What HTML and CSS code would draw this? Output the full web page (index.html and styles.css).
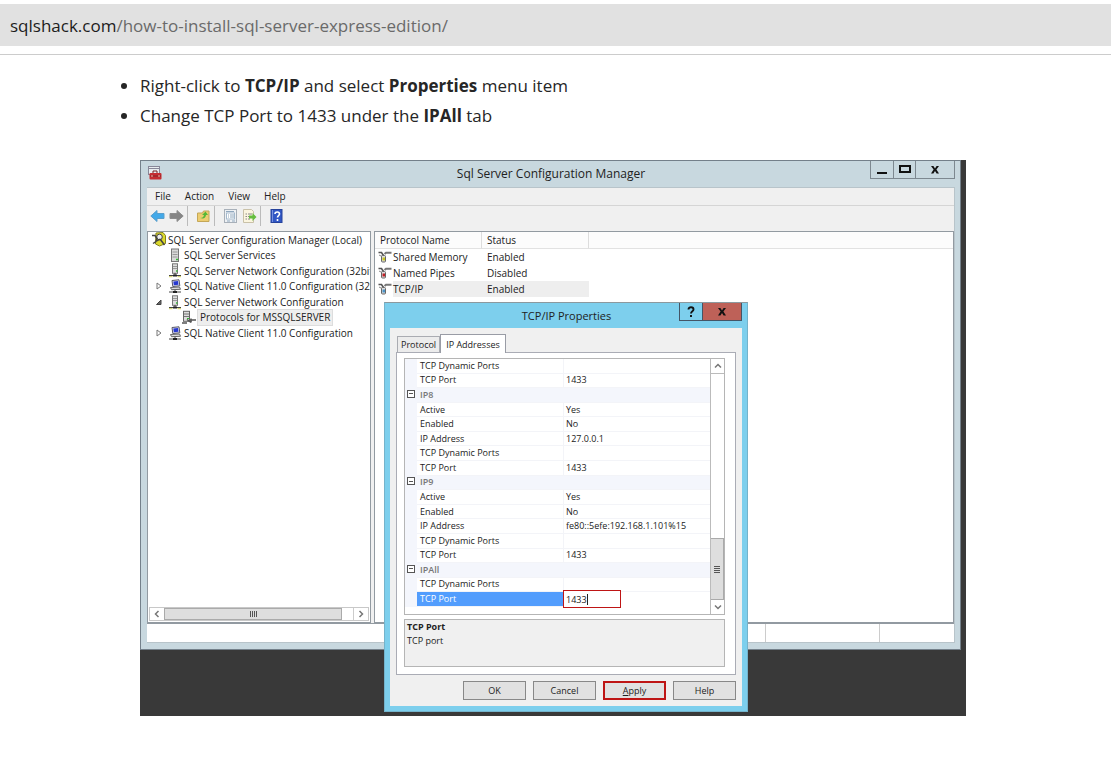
FILE: index.html
```html
<!DOCTYPE html>
<html lang="en">
<head>
<meta charset="utf-8">
<title>How to install SQL Server Express edition</title>
<link rel="stylesheet" href="styles.css">
</head>
<body>
<svg class="defs" width="0" height="0" aria-hidden="true">
  <symbol id="server" viewBox="0 0 14 15"><rect x="3.500" y="1" width="7" height="12.500" fill="#d9d9d9" stroke="#777"/><path d="M4.500 4h5M4.500 6.500h5M4.500 9h5" stroke="#999"/><path d="M8 11.500h2" stroke="#3b3" stroke-width="1.500"/></symbol>
  <symbol id="netserver" viewBox="0 0 14 15"><rect x="4.500" y=".8" width="5" height="9.500" fill="#ddd" stroke="#777"/><path d="M5 3.500h4M5 5.500h4" stroke="#999"/><path d="M8 8h1.500" stroke="#3b3" stroke-width="1.500"/><path d="M7 10v3M1 12.500h12" stroke="#444"/><path d="M5 12.500h4" stroke="#222" stroke-width="2"/><path d="M1 13.700h3.500M9.500 13.700H13" stroke="#cc5"/></symbol>
  <symbol id="client" viewBox="0 0 14 15"><path d="M4 1.500l7-.7.8 6-7 .7z" fill="#e4e4f4" stroke="#556"/><path d="M5.300 2.600l4.700-.5.500 3.700-4.700.5z" fill="#2638d0"/><path d="M2.500 8.500l9-.5 1 2.300-9 .4z" fill="#ddd" stroke="#666"/><path d="M7 11v2M1 13h12" stroke="#444"/><path d="M5 13h4" stroke="#222" stroke-width="2"/></symbol>
  <symbol id="pipe" viewBox="0 0 14 12"><path d="M6.500 3l1.500-1.200h5.500" fill="none" stroke="#777" stroke-width="2"/><path d="M.5 1.500h3l2 3" fill="none" stroke="#555" stroke-width="1.600"/><path d="M1 4l3 1.500" stroke="#888"/><rect x="3.500" y="4.500" width="4" height="6.500" rx="1" fill="#ddd" stroke="#666"/><rect x="4.500" y="6.500" width="2.500" height="3" fill="currentColor"/></symbol>
</svg>

<header class="address">
  <span class="host">sqlshack.com</span><span class="path">/how-to-install-sql-server-express-edition/</span>
</header>

<main class="article">
  <ul class="steps">
    <li>Right-click to <strong>TCP/IP</strong> and select <strong>Properties</strong> menu item</li>
    <li>Change TCP Port to 1433 under the <strong>IPAll</strong> tab</li>
  </ul>

  <section class="desktop">
    <div class="manager">
      <div class="manager-title">
        <svg class="app-icon" viewBox="0 0 14 14"><rect x=".5" y=".5" width="11" height="8" fill="#e8edf0" stroke="#889"/><path d="M1 2.500h10" stroke="#889"/><path d="M5 7V5h4v2" fill="none" stroke="#722"/><rect x="1.500" y="7" width="12" height="6.500" rx="1" fill="#c62c31"/><path d="M2 10h11" stroke="#80262a"/><path d="M4 9v2M11 9v2" stroke="#eba"/></svg>
        <h1>Sql Server Configuration Manager</h1>
        <div class="window-buttons">
          <button aria-label="Minimize"><svg viewBox="0 0 12 10"><path d="M1 8h10" stroke="#111" stroke-width="2"/></svg></button>
          <button aria-label="Maximize"><svg viewBox="0 0 12 10"><rect x="1" y="1" width="10" height="6" fill="none" stroke="#111" stroke-width="2"/></svg></button>
          <button class="wide" aria-label="Close"><svg viewBox="0 0 12 10"><path d="M2 1h2.400L6 3.400 7.600 1H10L7.400 4.500 10 8.500H7.600L6 6 4.400 8.500H2l2.600-4z" fill="#111"/></svg></button>
        </div>
      </div>
      <div class="manager-client">
        <nav class="menu">
          <button>File</button><button>Action</button><button>View</button><button>Help</button>
        </nav>
        <div class="toolbar">
          <button aria-label="Back"><svg viewBox="0 0 15 14"><path d="M.8 7L7 1.500v3h7v5H7v3z" fill="#42a9e9" stroke="#5a9fcc"/></svg></button>
          <button class="forward" aria-label="Forward"><svg viewBox="0 0 15 14"><path d="M14.200 7L8 1.500v3H1v5h7v3z" fill="#858585" stroke="#8d8d8d"/></svg></button>
          <i></i>
          <button aria-label="Up one level"><svg viewBox="0 0 15 14"><path d="M1.500 4h5l1-2h5.500v10.500H1.500z" fill="#edcd71" stroke="#c4a758"/><path d="M4 9c3 0 3.500-1 4-3H6l3.500-3.500L12 6h-2c-.5 3-2 4-6 3z" fill="#55b838"/></svg></button>
          <i></i>
          <button aria-label="Properties"><svg viewBox="0 0 15 14"><rect x="1.500" y=".5" width="12" height="13" fill="#eef1f4" stroke="#a8b0b9"/><rect x="3.500" y="4" width="8" height="6" fill="#fff" stroke="#a5bacd"/><path d="M3 2.500h8M5 6h1M7 6h4M5 8h1M7 8h4M4 12h3M9 12h3" stroke="#8fa7bd"/></svg></button>
          <button class="export" aria-label="Export list"><svg viewBox="0 0 15 14"><path d="M1.500.5h8l2 2v11h-10z" fill="#fbf5df" stroke="#c9c1a8"/><path d="M3.500 5H5M6 5h4M3.500 7.500H5M6 7.500h2M3.500 10H5M6 10h2" stroke="#888"/><path d="M7 6.500h3.500V4l4 4-4 4V9.500H7z" fill="#65bd3e"/></svg></button>
          <i></i>
          <button aria-label="Help"><svg viewBox="0 0 15 14"><rect x="2" y=".5" width="11" height="13" fill="#3157c5" stroke="#26439b"/><path d="M3.500 1v12" stroke="#7892df"/><path d="M6 5c0-3 4.500-2.500 4.500 0 0 1.600-2 1.500-2 3.500M8.500 10v2" fill="none" stroke="#fff" stroke-width="1.600"/></svg></button>
        </div>
        <div class="panes">
          <div class="tree-pane">
            <ul class="tree">
              <li class="root"><svg viewBox="0 0 14 15"><path d="M4 1l7-.5 2.500 3v8l-6 2.500-4-2z" fill="#dcd92b" stroke="#83801c"/><circle cx="7.500" cy="5" r="2.800" fill="#eee" stroke="#444"/><path d="M0 3.500h3l2 3-1 3-3 2M8 7l4.500 6M5 9l3-2" fill="none" stroke="#444" stroke-width="1.500"/></svg><span>SQL Server Configuration Manager (Local)</span></li>
              <li><b></b><svg><use href="#server"/></svg><span>SQL Server Services</span></li>
              <li><b></b><svg><use href="#netserver"/></svg><span>SQL Server Network Configuration (32bit</span></li>
              <li><b><svg viewBox="0 0 6 8"><path d="M1 1v6l4-3z" fill="#fff" stroke="#777"/></svg></b><svg><use href="#client"/></svg><span>SQL Native Client 11.0 Configuration (32l</span></li>
              <li><b><svg viewBox="0 0 6 8"><path d="M5 2v4.500H.5z" fill="#666" stroke="#444"/></svg></b><svg><use href="#netserver"/></svg><span>SQL Server Network Configuration</span></li>
              <li class="leaf"><svg viewBox="0 0 14 14"><rect x="1.500" y=".8" width="6" height="10" fill="#ddd" stroke="#666"/><path d="M2 3.500h5M2 6h5" stroke="#777"/><path d="M0 12.500h5M5 9l4 3M8 9.500h6M9 8v4" stroke="#555" stroke-width="1.500"/><path d="M5 8h2" stroke="#3b3"/></svg><span class="selected">Protocols for MSSQLSERVER</span></li>
              <li><b><svg viewBox="0 0 6 8"><path d="M1 1v6l4-3z" fill="#fff" stroke="#777"/></svg></b><svg><use href="#client"/></svg><span>SQL Native Client 11.0 Configuration</span></li>
            </ul>
            <div class="scroll-x">
              <button aria-label="Scroll left"><svg viewBox="0 0 8 8"><path d="M5.500 1l-3 3 3 3" fill="none" stroke="#777" stroke-width="1.500"/></svg></button>
              <div class="thumb"><svg viewBox="0 0 8 8"><path d="M1.500 1v6M3.500 1v6M5.500 1v6M7.500 1v6" stroke="#555"/></svg></div>
              <div class="track"></div>
              <button aria-label="Scroll right"><svg viewBox="0 0 8 8"><path d="M2.500 1l3 3-3 3" fill="none" stroke="#777" stroke-width="1.500"/></svg></button>
            </div>
          </div>
          <div class="list-pane">
            <table class="protocols">
              <thead><tr><th class="name">Protocol Name</th><th class="status">Status</th><th></th></tr></thead>
              <tbody>
                <tr><td><span class="cell"><svg class="yellow"><use href="#pipe"/></svg>Shared Memory</span></td><td>Enabled</td><td></td></tr>
                <tr><td><span class="cell"><svg class="red"><use href="#pipe"/></svg>Named Pipes</span></td><td>Disabled</td><td></td></tr>
                <tr class="current"><td><span class="cell"><svg class="blue"><use href="#pipe"/></svg><em>TCP/IP</em></span></td><td>Enabled</td><td></td></tr>
              </tbody>
            </table>
          </div>
        </div>
        <div class="statusbar"><span></span><span class="s1"></span><span class="s2"></span></div>
      </div>
    </div>

    <div class="dialog" role="dialog" aria-labelledby="dialog-title">
      <div class="dialog-title">
        <h2 id="dialog-title">TCP/IP Properties</h2>
        <div class="window-buttons">
          <button aria-label="Help"><svg viewBox="0 0 12 12"><path d="M3.500 3.500c0-3 5-3 5 0 0 1.800-2.500 1.600-2.500 4M6 9v2" fill="none" stroke="#111" stroke-width="1.900"/></svg></button>
          <button class="wide close" aria-label="Close"><svg viewBox="0 0 12 12"><path d="M2 2h2.400L6 4.400 7.600 2H10L7.400 5.500 10 9.500H7.600L6 7 4.400 9.500H2l2.600-4z" fill="#111"/></svg></button>
        </div>
      </div>
      <div class="dialog-client">
        <div class="tabs" role="tablist">
          <button role="tab">Protocol</button><button role="tab" class="active" aria-selected="true">IP Addresses</button>
        </div>
        <div class="tab-panel">
          <div class="grid-box">
            <table class="props">
              <tbody>
                <tr><td class="gutter"></td><td class="key">TCP Dynamic Ports</td><td></td></tr>
                <tr><td class="gutter"></td><td>TCP Port</td><td>1433</td></tr>
                <tr class="group"><td class="gutter"><button aria-label="Collapse IP8"></button></td><th colspan="2">IP8</th></tr>
                <tr><td class="gutter"></td><td>Active</td><td>Yes</td></tr>
                <tr><td class="gutter"></td><td>Enabled</td><td>No</td></tr>
                <tr><td class="gutter"></td><td>IP Address</td><td>127.0.0.1</td></tr>
                <tr><td class="gutter"></td><td>TCP Dynamic Ports</td><td></td></tr>
                <tr><td class="gutter"></td><td>TCP Port</td><td>1433</td></tr>
                <tr class="group"><td class="gutter"><button aria-label="Collapse IP9"></button></td><th colspan="2">IP9</th></tr>
                <tr><td class="gutter"></td><td>Active</td><td>Yes</td></tr>
                <tr><td class="gutter"></td><td>Enabled</td><td>No</td></tr>
                <tr><td class="gutter"></td><td>IP Address</td><td>fe80::5efe:192.168.1.101%15</td></tr>
                <tr><td class="gutter"></td><td>TCP Dynamic Ports</td><td></td></tr>
                <tr><td class="gutter"></td><td>TCP Port</td><td>1433</td></tr>
                <tr class="group"><td class="gutter"><button aria-label="Collapse IPAll"></button></td><th colspan="2">IPAll</th></tr>
                <tr><td class="gutter"></td><td>TCP Dynamic Ports</td><td></td></tr>
                <tr class="editing"><td class="gutter"></td><td><label for="port">TCP Port</label></td><td class="editor"><div class="field"><input id="port" type="text" value="1433"><span class="caret"></span></div></td></tr>
              </tbody>
            </table>
            <div class="scroll-y">
              <button aria-label="Scroll up"><svg viewBox="0 0 8 8"><path d="M1 5.500l3-3 3 3" fill="none" stroke="#777" stroke-width="1.500"/></svg></button>
              <div class="track"></div>
              <div class="thumb"><svg viewBox="0 0 8 8"><path d="M1 1.500h6M1 3.500h6M1 5.500h6M1 7.500h6" stroke="#555"/></svg></div>
              <button aria-label="Scroll down"><svg viewBox="0 0 8 8"><path d="M1 2.500l3 3 3-3" fill="none" stroke="#777" stroke-width="1.500"/></svg></button>
            </div>
          </div>
          <div class="description"><strong>TCP Port</strong><p>TCP port</p></div>
        </div>
        <div class="actions">
          <button>OK</button><button>Cancel</button><button class="apply"><u>A</u>pply</button><button>Help</button>
        </div>
      </div>
    </div>
  </section>
</main>
</body>
</html>
```
FILE: styles.css
```css
* { box-sizing: border-box; }
body { margin: 0; padding-top: 4px; background: #fff; color: #262626; font-family: "Open Sans", "Noto Sans", sans-serif; }
button { margin: 0; padding: 0; border: 0; background: none; color: inherit; font: inherit; }
svg { display: block; flex: none; }
.defs { position: absolute; }

.address { height: 42px; padding-left: 10px; background: #e1e1e1; font-size: 17px; line-height: 43px; white-space: nowrap; }
.host { color: #1c1c1c; }
.path { color: #6a6a6a; }

.article { margin-top: 8px; padding: 16px 145px 41px 140px; border-top: 1px solid #ccc; }
.steps { margin: 0 0 29px; padding: 0; font-size: 17px; line-height: 30px; }
.steps strong { font-weight: 700; }

.desktop { position: relative; height: 556px; padding-right: 5px; background: #393939; font-size: 10px; color: #222; }
.manager { display: flex; flex-direction: column; height: 490px; padding: 0 5px 6px 6px; border: 1px solid #74808a; background: #c8d8df; }
.manager-title { display: flex; align-items: flex-start; height: 26px; }
.app-icon { width: 14px; height: 14px; margin: 5px 0 0 1px; }
h1, h2 { flex: 1; margin: 0; font-size: 11px; font-weight: 400; line-height: 26px; text-align: center; }
h1 { padding-left: 70px; font-size: 12px; }
.window-buttons { display: flex; border: 1px solid #7d8890; border-top: 0; }
.window-buttons button { display: flex; align-items: center; justify-content: center; width: 22px; height: 17px; }
.window-buttons button + button { border-left: 1px solid #7d8890; }
.window-buttons .wide { width: 39px; }
.window-buttons svg { width: 12px; height: 10px; }

.manager-client { display: flex; flex: 1; flex-direction: column; min-height: 0; border: 1px solid #b8c4ca; border-left: 0; background: #f0f0f0; }
.menu { display: flex; gap: 14px; height: 18px; padding-left: 8px; border-bottom: 1px solid #d5d5d5; font-size: 10px; line-height: 15px; }
.toolbar { display: flex; align-items: center; height: 25px; padding: 0 4px 5px 3px; }
.toolbar svg { width: 15px; height: 14px; }
.toolbar i { width: 1px; height: 20px; margin: 0 8px 0 3px; background: #bbb; }
.toolbar .forward, .toolbar .export { margin-left: 4px; }

.panes { display: flex; flex: 1; gap: 3px; min-height: 0; }
.tree-pane { display: flex; flex: 0 0 224px; flex-direction: column; justify-content: space-between; min-width: 0; border: 1px solid #929aa1; background: #fff; }
.tree { display: grid; grid-auto-rows: 1fr; height: 109px; margin: 0; padding: 0 0 0 3px; overflow: hidden; list-style: none; font-size: 10px; white-space: nowrap; }
.tree li { display: flex; align-items: center; padding-left: 5px; }
.tree .root { padding-left: 1px; }
.tree .leaf { padding-left: 31px; }
.tree li > svg { width: 14px; height: 15px; margin-right: 2px; }
.tree b { width: 12px; }
.tree b svg { width: 6px; height: 8px; }
.tree .selected { padding: 0 2px; background: #eee; line-height: 15px; outline: 1px solid #ddd; }
.scroll-x { display: flex; height: 14px; margin: 1px; border: 1px solid #c8c8c8; }
.scroll-x button, .scroll-x .thumb { display: flex; align-items: center; justify-content: center; }
.scroll-x button { width: 14px; }
.scroll-x svg, .scroll-y svg { width: 8px; height: 8px; }
.scroll-x .thumb { flex: 1; border: 1px solid #aaa; background: #dedede; }
.scroll-x .track { width: 12px; border-right: 1px solid #ccc; }

.list-pane { flex: 1; min-width: 0; border: 1px solid #929aa1; background: #fff; }
.protocols { width: 100%; border-spacing: 0; table-layout: fixed; font-size: 10px; }
.protocols tr { height: 16px; }
.protocols th, .protocols td { padding: 0 5px; line-height: 16px; text-align: left; font-weight: 400; white-space: nowrap; }
.protocols th { border-right: 1px solid #ddd; border-bottom: 1px solid #e2e2e2; background: #fcfcfc; }
.protocols th:last-child { border-right: 0; }
.protocols .name { width: 107px; }
.protocols .status { width: 107px; }
.protocols td:first-child { padding: 0 0 0 3px; }
.cell { display: flex; align-items: center; height: 16px; }
.cell svg { width: 14px; height: 12px; margin-right: 1px; }
.cell em { flex: 1; background: #eee; font-style: normal; }
.current td:nth-child(2) { background: #eee; }
.yellow { color: #c8c520; }
.red { color: #c11f24; }
.blue { color: #4c94c8; }

.statusbar { display: flex; height: 19px; border-top: 1px solid #929aa1; background: #fff; }
.statusbar span { flex: 1; }
.statusbar .s1 { flex: 0 0 114px; border-left: 1px solid #ccc; }
.statusbar .s2 { flex: 0 0 75px; border-left: 1px solid #ccc; }

.dialog { position: absolute; top: 142px; left: 244px; width: 364px; padding: 0 5px 5px; border: 1px solid #74b3cb; border-top-color: #8c999e; background: #7dcfed; font-size: 9px; }
.dialog-title { display: flex; align-items: flex-start; height: 25px; }
.dialog-title h2 { padding-left: 64px; }
.dialog .window-buttons { border-color: #456; }
.dialog .window-buttons svg { height: 12px; }
.dialog .close { border-color: #456; background: #be6158; }
.dialog-client { padding: 6px; background: #f0f0f0; }
.tabs { display: flex; align-items: flex-end; height: 18px; padding-left: 1px; }
.tabs button { height: 16px; padding: 0 3px; border: 1px solid #aaacb2; border-bottom: 0; background: #ececec; line-height: 15px; white-space: nowrap; }
.tabs .active { height: 19px; margin-bottom: -1px; padding: 0 5px; border-color: #999ca5; background: #fff; line-height: 15px; }
.tab-panel { display: flex; flex-direction: column; gap: 4px; height: 323px; padding: 5px 10px 7px 7px; border: 1px solid #aaacb5; background: #fff; }
.grid-box { display: flex; height: 257px; border: 1px solid #b5b5b5; }
.props { flex: 1; height: 248px; border-spacing: 0; table-layout: fixed; width: 100%; }
.props td, .props th { height: 14px; padding: 0 3px; border-bottom: 1px solid #f3f4f8; line-height: 12px; text-align: left; white-space: nowrap; }
.props .gutter { width: 12px; padding: 0; border-color: #f4f6fc; background: #f4f6fc; }
.props .key { width: 146px; }
.props td + td + td { padding-left: 2px; border-left: 1px solid #f3f4f8; }
.props .group th { background: #f4f6fc; color: #777; font-weight: 600; }
.props .gutter button { display: block; width: 8px; height: 8px; margin: 0 0 2px 2px; border: 1px solid #555; background: linear-gradient(#555, #555) center / 4px 1px no-repeat #fff; }
.props .editing td:nth-child(2) { background: #529dfd; color: #fff; }
.props .editing .editor { padding: 0; border: 0; }
.field { display: flex; align-items: center; width: 58px; height: 18px; margin: -3px 0 -2px; padding-left: 2px; border: 1px solid #be1515; background: #fff; }
.field input { width: 21px; height: 14px; padding: 0; border: 0; outline: 0; background: none; color: #222; font: inherit; }
.caret { width: 1px; height: 11px; background: #222; }
.scroll-y { display: flex; flex: 0 0 14px; flex-direction: column; border-left: 1px solid #bbb; }
.scroll-y button, .scroll-y .thumb { display: flex; align-items: center; justify-content: center; }
.scroll-y button { height: 14px; }
.scroll-y .track { flex: 1; border-top: 1px solid #bbb; }
.scroll-y .thumb { height: 62px; border: 1px solid #aaa; border-left: 0; background: #dedede; }
.description { flex: 1; padding: 0 2px; border: 1px solid #b5b5b5; background: #f0f0f0; line-height: 14px; }
.description p { margin: 0; }
.actions { display: flex; justify-content: flex-end; gap: 7px; padding-top: 6px; }
.actions button { width: 63px; height: 19px; border: 1px solid #888; background: #e1e1e1; }
.actions .apply { border: 2px solid #be1515; }
```
